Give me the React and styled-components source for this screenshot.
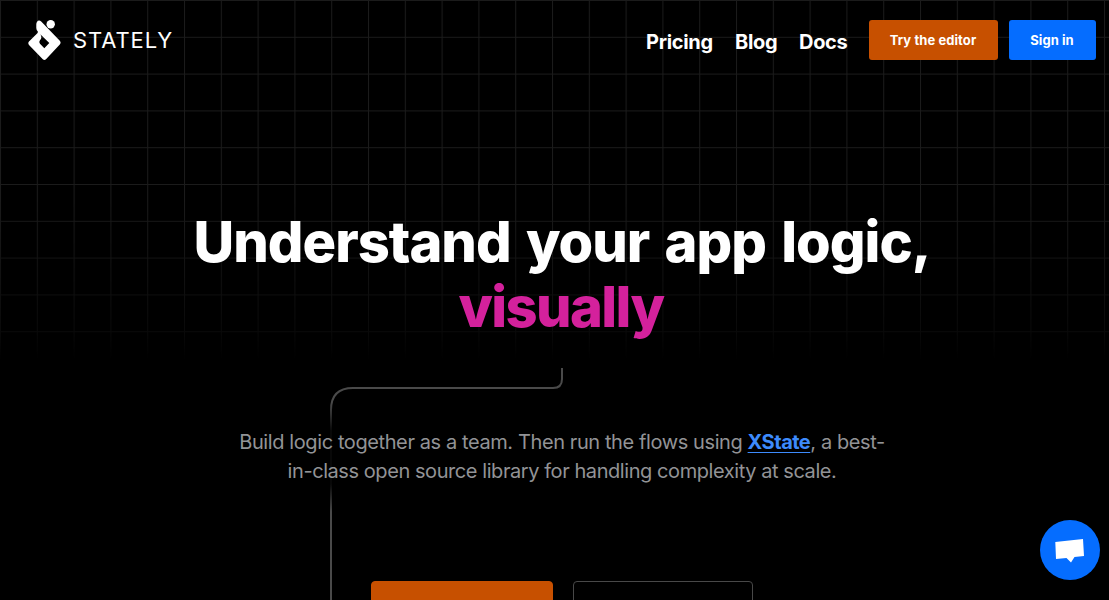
import React from 'react';
import styled, { createGlobalStyle } from 'styled-components';

const GlobalStyle = createGlobalStyle`
  * { box-sizing: border-box; }
  html { background: #000; }
  body { margin: 0; background: #000; color: #fff; font-family: Inter, "Liberation Sans", sans-serif; overflow: hidden; }
  a { color: inherit; text-decoration: none; }
`;

const Page = styled.div`
  position: relative;
  height: 600px;
  overflow: hidden;
  background: #000;
`;

const GridBackdrop = styled.svg`
  position: absolute;
  inset: 0 0 auto 0;
  width: 100%;
  height: 360px;
  mask-image: linear-gradient(#000 55%, rgba(0, 0, 0, 0.35) 92%, transparent);
`;

const Header = styled.header`
  position: relative;
  display: flex;
  align-items: center;
  justify-content: space-between;
  height: 80px;
  padding: 0 13px 0 28px;
`;

const Brand = styled.a`
  display: flex;
  align-items: center;
  gap: 12px;
`;

const Mark = styled.svg`
  display: block;
  width: 33px;
  height: 40px;
`;

const Wordmark = styled.span`
  font-size: 22px;
  line-height: 40px;
  letter-spacing: 0.9px;
`;

const Nav = styled.nav`
  display: flex;
  align-items: center;
`;

const NavLink = styled.a`
  width: ${(p) => p.$width}px;
  margin-right: 21px;
  padding-top: 3px;
  font-size: 20px;
  font-weight: 700;
  line-height: 28px;
  letter-spacing: -0.3px;
  white-space: nowrap;
`;

const Button = styled.a`
  display: flex;
  align-items: center;
  justify-content: center;
  width: ${(p) => p.$width}px;
  height: 40px;
  padding-right: 1px;
  border-radius: 3px;
  background: ${(p) => p.$color};
  font-size: 13px;
  font-weight: 700;
  letter-spacing: 0.08px;
  white-space: nowrap;
  & + & { margin-left: 11px; }
`;

const Hero = styled.main`
  position: relative;
  display: flex;
  flex-direction: column;
  align-items: center;
  padding: 130px 0 0 15px;
`;

const Title = styled.h1`
  margin: 0;
  font-size: 56px;
  font-weight: 800;
  line-height: 65px;
  letter-spacing: -1px;
  word-spacing: 4px;
  text-align: center;
  white-space: nowrap;
`;

const Accent = styled.span`
  display: block;
  padding-right: 2px;
  color: #d4219c;
  letter-spacing: -1.6px;
`;

const Connector = styled.svg`
  position: absolute;
  left: 329px;
  top: 368px;
  width: 236px;
  height: 232px;
`;

const Lead = styled.p`
  position: relative;
  margin: 88px 0 0;
  color: #929396;
  font-size: 20px;
  line-height: 29px;
  text-align: center;
  white-space: nowrap;
`;

const Line = styled.span`
  display: block;
  letter-spacing: ${(p) => p.$track}px;
`;

const TextLink = styled.a`
  && { color: #3d8bfd; }
  font-weight: 700;
  letter-spacing: -0.5px;
  text-decoration: underline;
  text-decoration-thickness: 1px;
  text-underline-offset: 3px;
`;

const Actions = styled.div`
  display: flex;
  gap: 20px;
  margin-top: 95px;
`;

const Action = styled.a`
  width: ${(p) => p.$width}px;
  height: 56px;
  border: 1px solid ${(p) => p.$border};
  border-radius: 4px;
  background: ${(p) => p.$color};
`;

const ChatButton = styled.button`
  position: absolute;
  right: 9px;
  bottom: 20px;
  width: 60px;
  height: 60px;
  padding: 0;
  border: 0;
  border-radius: 50%;
  background: #056dff;
`;

export default function App() {
  return (
    <Page>
      <GlobalStyle />
      <GridBackdrop aria-hidden="true">
        <defs>
          <pattern id="grid" width="36.8" height="36.8" patternUnits="userSpaceOnUse">
            <path d="M0 .5H36.8M.5 0V36.8" stroke="#1b1b1b" fill="none" />
          </pattern>
        </defs>
        <rect width="100%" height="100%" fill="url(#grid)" />
      </GridBackdrop>
      <Connector viewBox="0 0 236 232" fill="none" stroke="url(#wire)" strokeWidth="2">
        <defs>
          <linearGradient id="wire" gradientUnits="userSpaceOnUse" x1="0" y1="0" x2="0" y2="232">
            <stop offset="0.15" stopColor="#4a4a4a" />
            <stop offset="0.27" stopColor="#080808" />
            <stop offset="0.5" stopColor="#080808" />
            <stop offset="0.62" stopColor="#4a4a4a" />
          </linearGradient>
        </defs>
        <path d="M233 0V11Q233 20 224 20H24Q2 20 2 42V232" />
      </Connector>
      <Header>
        <Brand href="#">
          <Mark viewBox="0 0 33 40" fill="#fff">
            <circle cx="22.7" cy="4.2" r="4.2" />
            <path fillRule="evenodd" d="M8.3 8V4.6C8.3 1.2 10.8-.8 13.2 1.6L31.8 20.8Q33.4 22.6 31.8 24.4L18 39.2Q16.4 40.6 14.8 39.2L1 25Q-.4 23.3 1 21.6L9.6 13L10 11.8Q8.3 10 8.3 8ZM12.3 14.2Q14.4 17.6 12.2 20.1Q10.6 22 12 23.7L16.3 28.3L21.3 23Z" />
          </Mark>
          <Wordmark>STATELY</Wordmark>
        </Brand>
        <Nav>
          <NavLink href="#" $width={68}>Pricing</NavLink>
          <NavLink href="#" $width={43}>Blog</NavLink>
          <NavLink href="#" $width={49}>Docs</NavLink>
          <Button href="#" $width={129} $color="#c75000">Try the editor</Button>
          <Button href="#" $width={87} $color="#056dff">Sign in</Button>
        </Nav>
      </Header>
      <Hero>
        <Title>
          Understand your app logic,
          <Accent>visually</Accent>
        </Title>
        <Lead>
          <Line $track={-0.4}>Build logic together as a team. Then run the flows using <TextLink href="#">XState</TextLink>, a best-</Line>
          <Line $track={-0.43}>in-class open source library for handling complexity at scale.</Line>
        </Lead>
        <Actions>
          <Action $width={182} $color="#c75000" $border="#c75000" />
          <Action $width={180} $color="transparent" $border="#484848" />
        </Actions>
      </Hero>
      <ChatButton aria-label="Chat">
        <svg width="60" height="60" viewBox="0 0 60 60" fill="#fff">
          <path d="M15.3 22L43 19L44 36L34.5 37L31 42.5L26.5 38L16 39Z" />
        </svg>
      </ChatButton>
    </Page>
  );
}
